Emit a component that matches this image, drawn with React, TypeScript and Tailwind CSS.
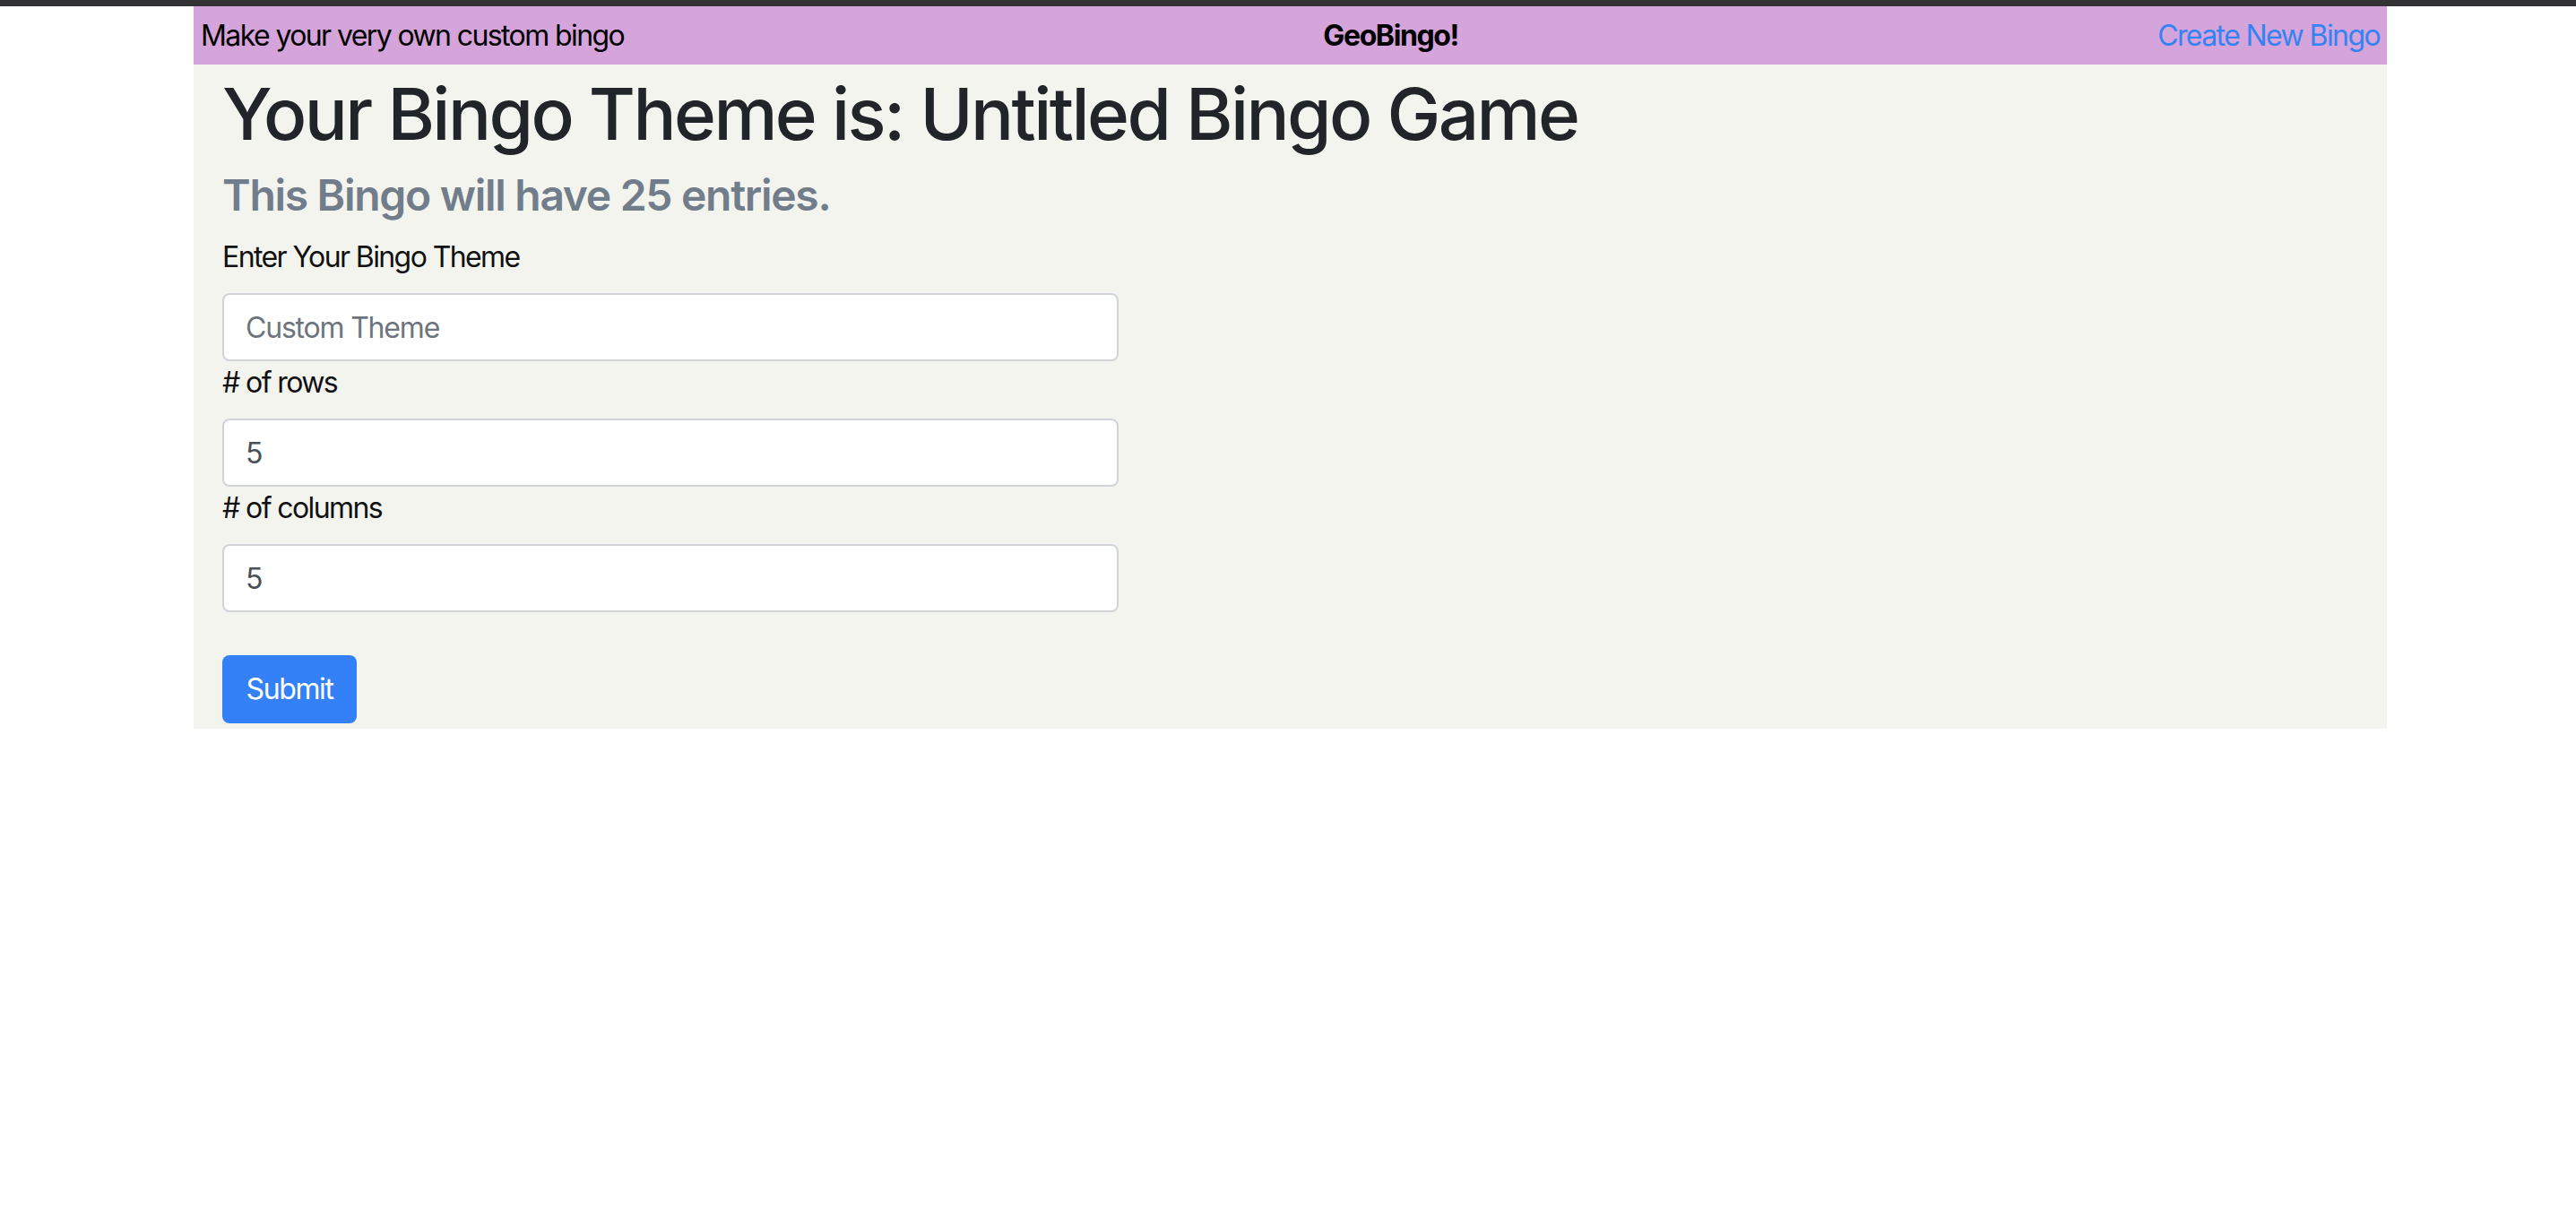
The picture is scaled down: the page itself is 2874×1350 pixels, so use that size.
import React, { useState } from 'react';

const Field = ({ label, value, placeholder, onChange }: { label: string; value: string; placeholder?: string; onChange: (v: string) => void }) => (
  <div className="flex flex-col">
    <label className="text-[32px] leading-[48px] tracking-[-1.6px] text-[#111] mb-4">{label}</label>
    <input
      className="w-[1000px] h-[76px] bg-white border-2 border-[#d0d4da] rounded-[8px] px-6 text-[32px] tracking-[-1.2px] text-[#495057] placeholder:text-[#6c757d] outline-none"
      value={value}
      placeholder={placeholder}
      onChange={(e) => onChange(e.target.value)}
    />
  </div>
);

const App = () => {
  const [theme, setTheme] = useState('');
  const [rows, setRows] = useState('5');
  const [cols, setCols] = useState('5');

  const entries = (parseInt(rows) || 0) * (parseInt(cols) || 0);

  return (
    <div className="min-h-[1350px] bg-white font-['Inter',sans-serif]">
      <div className="h-[7px] bg-[#333336]" />
      <div className="w-[2447px] ml-[216px]">
        <nav className="h-[65px] bg-[#d5a4da] flex items-center justify-between px-2 text-[32px] tracking-[-1.6px]">
          <span className="text-black">Make your very own custom bingo</span>
          <span className="text-black font-bold tracking-[-1.4px]">GeoBingo!</span>
          <a href="#" className="text-[#3383f5]">Create New Bingo</a>
        </nav>
        <div className="bg-[#f4f4ef] px-8 pt-[7px] pb-[6px]">
          <h1 className="text-[80px] leading-[96px] font-medium tracking-[-2.6px] text-[#212529] mb-[14px]">
            Your Bingo Theme is: {theme || 'Untitled Bingo Game'}
          </h1>
          <h4 className="text-[48px] leading-[58px] font-semibold tracking-[-1.3px] text-[#727d8b] mb-4">
            This Bingo will have {entries} entries.
          </h4>
          <form className="flex flex-col" onSubmit={(e) => e.preventDefault()}>
            <Field label="Enter Your Bingo Theme" value={theme} placeholder="Custom Theme" onChange={setTheme} />
            <Field label="# of rows" value={rows} onChange={setRows} />
            <Field label="# of columns" value={cols} onChange={setCols} />
            <div className="mt-[48px]">
              <button type="submit" className="w-[150px] h-[76px] bg-[#3380f7] text-white text-[32px] tracking-[-1.4px] rounded-[8px]">
                Submit
              </button>
            </div>
          </form>
        </div>
      </div>
    </div>
  );
};

export default App;
